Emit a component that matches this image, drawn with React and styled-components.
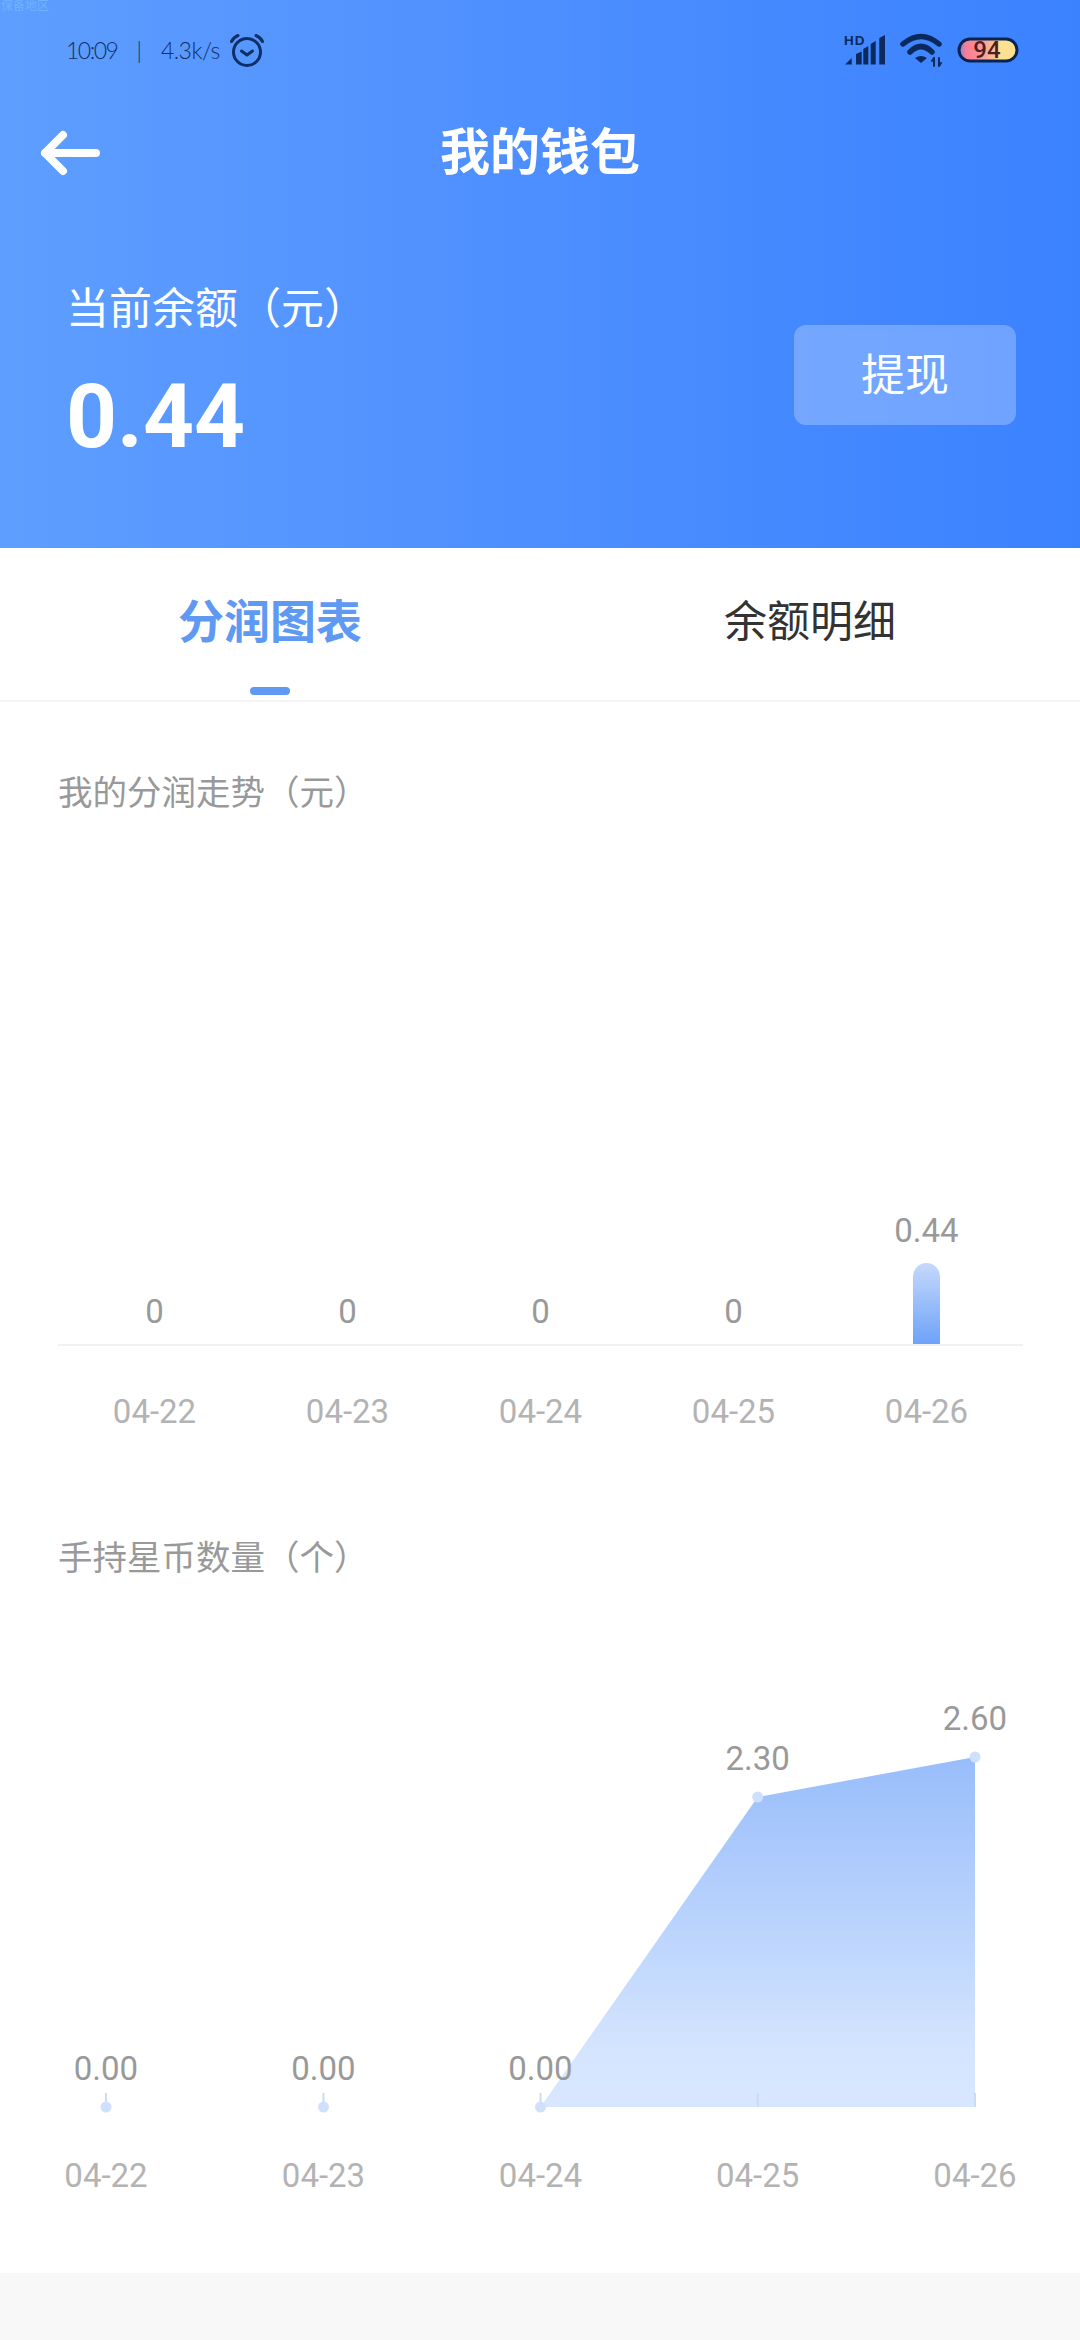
import React from 'react';
import styled, { createGlobalStyle } from 'styled-components';

const FONT = `Roboto, 'Noto Sans CJK SC', sans-serif`;

const GlobalStyle = createGlobalStyle`
  html, body {
    margin: 0;
    padding: 0;
    background: #f8f8f8;
    font-family: ${FONT};
  }
  * {
    box-sizing: border-box;
  }
`;

const Page = styled.div`
  position: relative;
  width: 1080px;
  height: 2340px;
  overflow: hidden;
  background: #f8f8f8;
`;

const Header = styled.header`
  height: 548px;
  background: linear-gradient(90deg, #5e9eff 0%, #4f90ff 45%, #3b82ff 100%);
`;

const FaintLabel = styled.span`
  position: absolute;
  top: -1px;
  left: 1px;
  font-size: 12px;
  line-height: 14px;
  color: #70b2ff;
`;

const StatusBar = styled.div`
  height: 100px;
  padding: 0 61px 0 66px;
  display: flex;
  align-items: center;
  justify-content: space-between;
`;

const StatusGroup = styled.div`
  display: flex;
  align-items: center;
  gap: ${(props) => props.$gap}px;
`;

const StatusText = styled.span`
  font-family: Lato, sans-serif;
  font-weight: 300;
  font-size: 23px;
  line-height: 34px;
  letter-spacing: ${(props) => props.$spacing || 0}px;
  color: #123063;
`;

const NavBar = styled.div`
  height: 106px;
  padding: 0 40px;
  display: grid;
  grid-template-columns: 1fr auto 1fr;
  align-items: center;
`;

const NavTitle = styled.h1`
  margin: 0;
  font-size: 50px;
  line-height: 60px;
  font-weight: 700;
  color: #fff;
`;

const BalanceRow = styled.div`
  padding: 75px 64px 0 66px;
  display: flex;
  justify-content: space-between;
  align-items: flex-start;
`;

const BalanceLabel = styled.div`
  font-size: 43px;
  line-height: 56px;
  color: #fff;
`;

const BalanceAmount = styled.div`
  margin-top: 30px;
  font-size: 89px;
  line-height: 100px;
  font-weight: 700;
  color: #fff;
`;

const WithdrawButton = styled.button`
  width: 222px;
  height: 100px;
  margin-top: 44px;
  padding: 0 0 6px;
  border: 0;
  border-radius: 12px;
  background: rgba(255, 255, 255, 0.26);
  font-family: ${FONT};
  font-size: 44px;
  color: #fff;
`;

const Tabs = styled.nav`
  height: 154px;
  display: flex;
  background: #fff;
  border-bottom: 2px solid #f4f4f4;
`;

const Tab = styled.div`
  flex: 1;
  padding-top: 48px;
  display: flex;
  flex-direction: column;
  align-items: center;
  font-size: ${(props) => (props.$active ? 46 : 43)}px;
  line-height: 52px;
  font-weight: ${(props) => (props.$active ? 700 : 400)};
  color: ${(props) => (props.$active ? '#5e99f3' : '#333')};
`;

const TabMark = styled.span`
  width: 40px;
  height: 8px;
  margin-top: 39px;
  border-radius: 4px;
  background: #5e99f3;
`;

const Content = styled.main`
  height: 1571px;
  background: #fff;
  padding-top: 67px;
`;

const SectionTitle = styled.h2`
  margin: ${(props) => props.$top || 0}px 0 0 58px;
  font-size: 34.5px;
  line-height: 48px;
  font-weight: 400;
  color: #999;
`;

const BarPlot = styled.div`
  width: 965px;
  height: 529px;
  margin-left: 58px;
  display: grid;
  grid-template-columns: repeat(5, 1fr);
  border-bottom: 2px solid #f1f1f3;
`;

const BarColumn = styled.div`
  display: flex;
  flex-direction: column;
  align-items: center;
  justify-content: flex-end;
`;

const BarValue = styled.div`
  margin-bottom: 12px;
  font-size: 33px;
  line-height: 40px;
  color: #999;
`;

const Bar = styled.div`
  width: 27px;
  height: ${(props) => props.$height}px;
  border-radius: 14px 14px 0 0;
  background: linear-gradient(180deg, #c5d9fb 0%, #6ea2f8 100%);
`;

const DateRow = styled.div`
  width: 965px;
  margin: 46px 0 0 58px;
  display: grid;
  grid-template-columns: repeat(5, 1fr);
`;

const DateLabel = styled.div`
  text-align: center;
  font-size: 33px;
  line-height: 40px;
  color: #b3b3b3;
`;

const AreaSvg = styled.svg`
  display: block;
`;

const ChartText = styled.text`
  font-family: Roboto, sans-serif;
  font-size: 33px;
  text-anchor: middle;
  fill: ${(props) => (props.$muted ? '#b3b3b3' : '#999')};
`;

const AlarmIcon = () => (
  <svg width="36" height="36" viewBox="0 0 36 36" fill="none" stroke="#0f2f66" strokeLinecap="round" strokeLinejoin="round">
    <circle cx="18" cy="20" r="13.5" strokeWidth="3" />
    <path d="M12.5 19l5.5 4 5.5-4" strokeWidth="3" />
    <path d="M2.500 9.500c1.500-3 3.500-4.800 6.500-6M33.500 9.500c-1.500-3-3.500-4.800-6.500-6" strokeWidth="3" />
  </svg>
);

const SignalIcon = () => (
  <svg width="44" height="32" viewBox="0 0 44 32" fill="#0b2a5c">
    <text x="1" y="10.500" fontFamily="'Liberation Sans', sans-serif" fontWeight="700" fontSize="13.500" letterSpacing="1">HD</text>
    <path d="M2 30.500l6.700-6.500v6.500zM13 30.500V20l5.700-2.500v13zM20.300 30.500V15l5-3v18.500zM27.700 30.500V10l5-3v23.500zM36.300 30.500V4l5.700-3v29.500z" />
  </svg>
);

const WifiIcon = () => (
  <svg width="44" height="34" viewBox="0 0 44 34" fill="none" stroke="#0b2a5c" strokeLinecap="round">
    <path d="M3 11Q21-4 39 11" strokeWidth="5.500" />
    <path d="M10 19Q21 8 32 19" strokeWidth="5.500" />
    <path d="M21 30l-6-5q6-4 12 0z" fill="#0b2a5c" stroke="none" />
    <path d="M34 25v8M34 25l-2 3M39 25v8M39 33l2-3" strokeWidth="2" />
  </svg>
);

const BatteryIcon = () => (
  <svg width="62" height="28" viewBox="0 0 62 28">
    <defs>
      <linearGradient id="batteryFill" x1="0" y1="0" x2="1" y2="0">
        <stop offset="0" stopColor="#7f82d8" />
        <stop offset="0.12" stopColor="#fb7d95" />
        <stop offset="0.3" stopColor="#fb8c95" />
        <stop offset="0.6" stopColor="#f8c095" />
        <stop offset="0.7" stopColor="#ffe090" />
        <stop offset="1" stopColor="#ffe090" />
      </linearGradient>
    </defs>
    <rect x="2" y="3" width="58" height="22" rx="11" fill="url(#batteryFill)" stroke="#0a2450" strokeWidth="3" />
    <text x="30" y="22" textAnchor="middle" fontFamily="Roboto, sans-serif" fontWeight="500" fontSize="24" fill="#4a1f24">94</text>
  </svg>
);

const BackArrow = () => (
  <svg width="60" height="46" viewBox="0 0 60 46" fill="none" stroke="#fff" strokeWidth="8" strokeLinecap="round" strokeLinejoin="round">
    <path d="M5 23h51M23 5L5 23l18 18" />
  </svg>
);

const barData = [
  { date: '04-22', value: '0', height: 0 },
  { date: '04-23', value: '0', height: 0 },
  { date: '04-24', value: '0', height: 0 },
  { date: '04-25', value: '0', height: 0 },
  { date: '04-26', value: '0.44', height: 81 },
];

const areaData = [
  { date: '04-22', value: '0.00', x: 106, y: 2107 },
  { date: '04-23', value: '0.00', x: 323.5, y: 2107 },
  { date: '04-24', value: '0.00', x: 540.5, y: 2107 },
  { date: '04-25', value: '2.30', x: 757.7, y: 1797 },
  { date: '04-26', value: '2.60', x: 975, y: 1757 },
];

// svg coordinates are page coordinates, the viewBox starts where the chart starts
const AreaChart = () => (
  <AreaSvg width="1080" height="691" viewBox="0 1582 1080 691">
    <defs>
      <linearGradient id="areaFill" x1="0" y1="0" x2="0" y2="1">
        <stop offset="0" stopColor="#98bdfb" />
        <stop offset="0.85" stopColor="#d5e5fe" />
        <stop offset="1" stopColor="#d8e7fe" />
      </linearGradient>
    </defs>
    <polygon points="540.5,2107 757.7,1797 975,1757 975,2107" fill="url(#areaFill)" />
    {areaData.map((point) => (
      <g key={point.date}>
        <line x1={point.x} x2={point.x} y1="2093" y2="2107" stroke="#c6ddf3" strokeWidth="2" />
        <circle cx={point.x} cy={point.y} r="5.5" fill="#cfe0fd" />
        <ChartText x={point.x} y={point.y - 27}>{point.value}</ChartText>
        <ChartText $muted x={point.x} y="2187">{point.date}</ChartText>
      </g>
    ))}
  </AreaSvg>
);

export default function App() {
  return (
    <Page>
      <GlobalStyle />
      <FaintLabel>保备地区</FaintLabel>
      <Header>
        <StatusBar>
          <StatusGroup $gap={19}>
            <StatusText $spacing={-1.5}>10:09</StatusText>
            <StatusText>|</StatusText>
            <StatusGroup $gap={9}>
              <StatusText $spacing={-0.5}>4.3k/s</StatusText>
              <AlarmIcon />
            </StatusGroup>
          </StatusGroup>
          <StatusGroup $gap={13}>
            <SignalIcon />
            <WifiIcon />
            <BatteryIcon />
          </StatusGroup>
        </StatusBar>
        <NavBar>
          <BackArrow />
          <NavTitle>我的钱包</NavTitle>
        </NavBar>
        <BalanceRow>
          <div>
            <BalanceLabel>当前余额（元）</BalanceLabel>
            <BalanceAmount>0.44</BalanceAmount>
          </div>
          <WithdrawButton>提现</WithdrawButton>
        </BalanceRow>
      </Header>
      <Tabs>
        <Tab $active>
          分润图表
          <TabMark />
        </Tab>
        <Tab>余额明细</Tab>
      </Tabs>
      <Content>
        <SectionTitle>我的分润走势（元）</SectionTitle>
        <BarPlot>
          {barData.map((item) => (
            <BarColumn key={item.date}>
              <BarValue>{item.value}</BarValue>
              {item.height > 0 && <Bar $height={item.height} />}
            </BarColumn>
          ))}
        </BarPlot>
        <DateRow>
          {barData.map((item) => (
            <DateLabel key={item.date}>{item.date}</DateLabel>
          ))}
        </DateRow>
        <SectionTitle $top={102}>手持星币数量（个）</SectionTitle>
        <AreaChart />
      </Content>
    </Page>
  );
}
